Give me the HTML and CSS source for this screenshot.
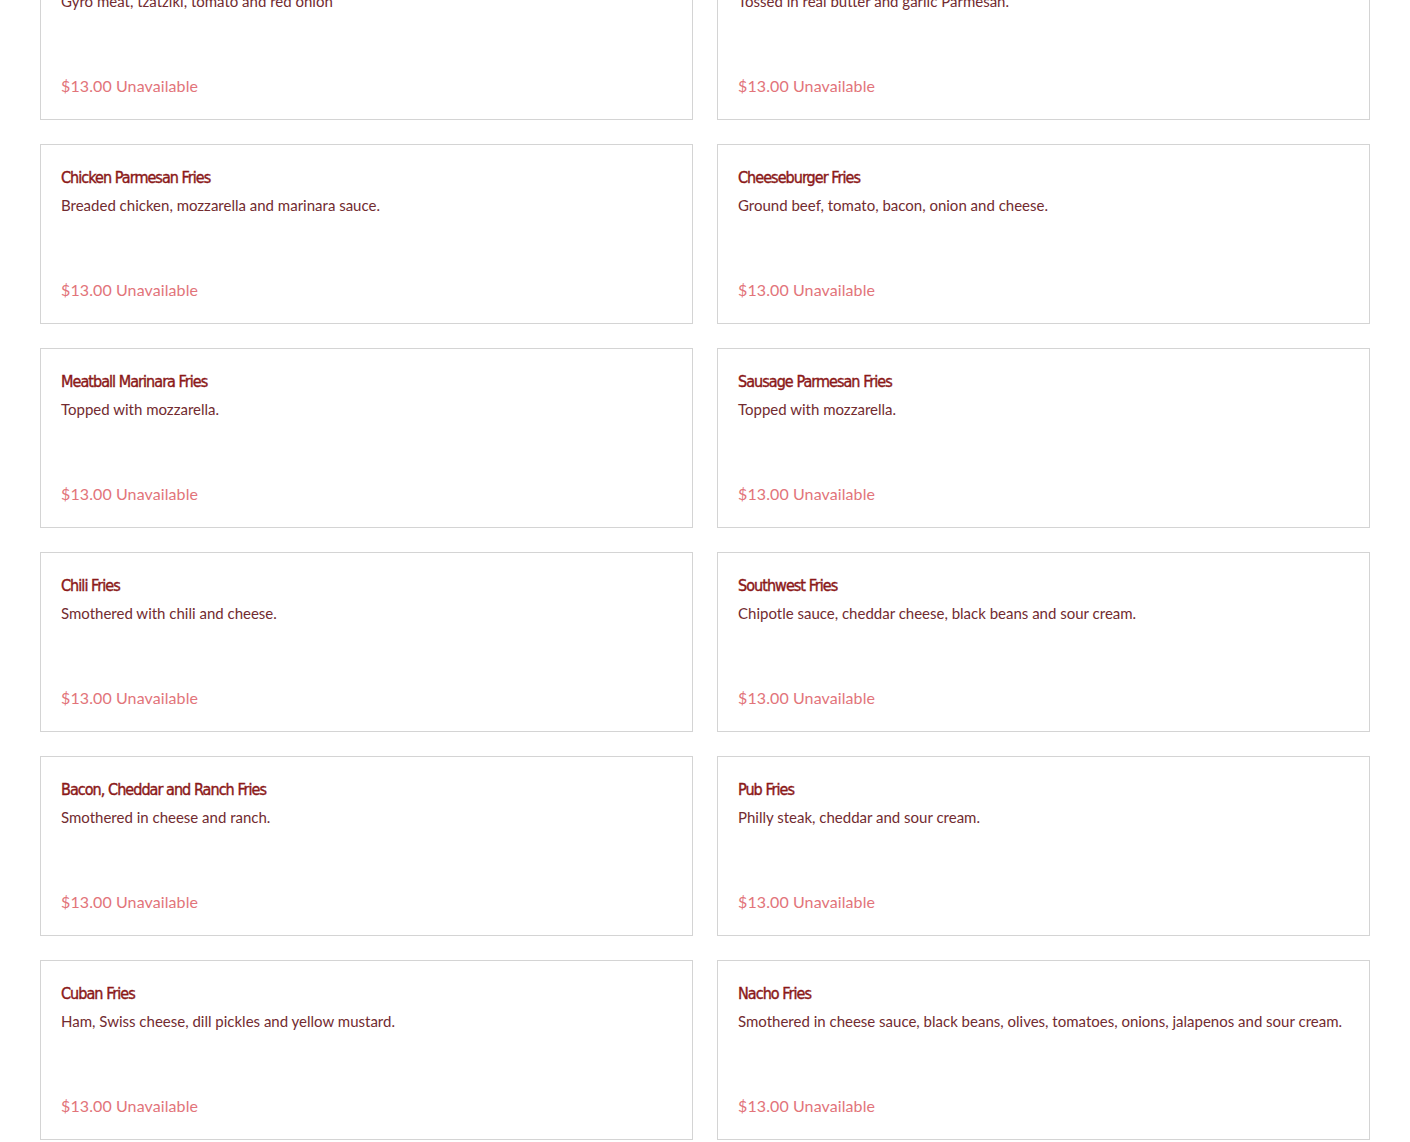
FILE: index.html
```html
<!DOCTYPE html>
<html lang="en">
<head>
  <meta charset="UTF-8" />
  <meta name="viewport" content="width=device-width, initial-scale=1.0" />
  <title>Fries</title>
  <link rel="stylesheet" href="styles.css">
</head>
<body>
  <div class="menu">
    <div class="item">
      <h3 class="item-name">Gyro Fries</h3>
      <p class="item-desc">Gyro meat, tzatziki, tomato and red onion</p>
      <div class="item-price">$13.00 <span>Unavailable</span></div>
    </div>
    <div class="item">
      <h3 class="item-name">Garlic Parmesan Fries</h3>
      <p class="item-desc">Tossed in real butter and garlic Parmesan.</p>
      <div class="item-price">$13.00 <span>Unavailable</span></div>
    </div>

    <div class="item">
      <h3 class="item-name">Chicken Parmesan Fries</h3>
      <p class="item-desc">Breaded chicken, mozzarella and marinara sauce.</p>
      <div class="item-price">$13.00 <span>Unavailable</span></div>
    </div>
    <div class="item">
      <h3 class="item-name">Cheeseburger Fries</h3>
      <p class="item-desc">Ground beef, tomato, bacon, onion and cheese.</p>
      <div class="item-price">$13.00 <span>Unavailable</span></div>
    </div>

    <div class="item">
      <h3 class="item-name">Meatball Marinara Fries</h3>
      <p class="item-desc">Topped with mozzarella.</p>
      <div class="item-price">$13.00 <span>Unavailable</span></div>
    </div>
    <div class="item">
      <h3 class="item-name">Sausage Parmesan Fries</h3>
      <p class="item-desc">Topped with mozzarella.</p>
      <div class="item-price">$13.00 <span>Unavailable</span></div>
    </div>

    <div class="item">
      <h3 class="item-name">Chili Fries</h3>
      <p class="item-desc">Smothered with chili and cheese.</p>
      <div class="item-price">$13.00 <span>Unavailable</span></div>
    </div>
    <div class="item">
      <h3 class="item-name">Southwest Fries</h3>
      <p class="item-desc">Chipotle sauce, cheddar cheese, black beans and sour cream.</p>
      <div class="item-price">$13.00 <span>Unavailable</span></div>
    </div>

    <div class="item">
      <h3 class="item-name">Bacon, Cheddar and Ranch Fries</h3>
      <p class="item-desc">Smothered in cheese and ranch.</p>
      <div class="item-price">$13.00 <span>Unavailable</span></div>
    </div>
    <div class="item">
      <h3 class="item-name">Pub Fries</h3>
      <p class="item-desc">Philly steak, cheddar and sour cream.</p>
      <div class="item-price">$13.00 <span>Unavailable</span></div>
    </div>

    <div class="item">
      <h3 class="item-name">Cuban Fries</h3>
      <p class="item-desc">Ham, Swiss cheese, dill pickles and yellow mustard.</p>
      <div class="item-price">$13.00 <span>Unavailable</span></div>
    </div>
    <div class="item">
      <h3 class="item-name">Nacho Fries</h3>
      <p class="item-desc">Smothered in cheese sauce, black beans, olives, tomatoes, onions, jalapenos and sour cream.</p>
      <div class="item-price">$13.00 <span>Unavailable</span></div>
    </div>
  </div>
</body>
</html>
```

FILE: styles.css
```css
body {
  margin: 0;
  background: #fff;
  font-family: 'Lato', 'Liberation Sans', sans-serif;
}

/* page is shown scrolled a little down the menu */
.menu {
  display: grid;
  grid-template-columns: 1fr 1fr;
  gap: 24px;
  padding: 0 40px;
  margin-top: -60px;
}

.item {
  height: 180px;
  box-sizing: border-box;
  border: 1px solid #d4d4d4;
  padding: 22px 20px;
  display: flex;
  flex-direction: column;
}

.item-name {
  margin: 0;
  font-family: 'DejaVu Sans Condensed', sans-serif;
  font-size: 16px;
  font-weight: normal;
  letter-spacing: -0.95px;
  -webkit-text-stroke: 0.4px #8b1818;
  color: #8b1818;
  line-height: 21px;
}

.item-desc {
  margin: 7px 0 0;
  font-size: 15px;
  color: #722b30;
  line-height: 20px;
}

.item-price {
  margin-top: auto;
  font-size: 16px;
  letter-spacing: 0.1px;
  color: #e2747a;
  line-height: 22px;
}
```
